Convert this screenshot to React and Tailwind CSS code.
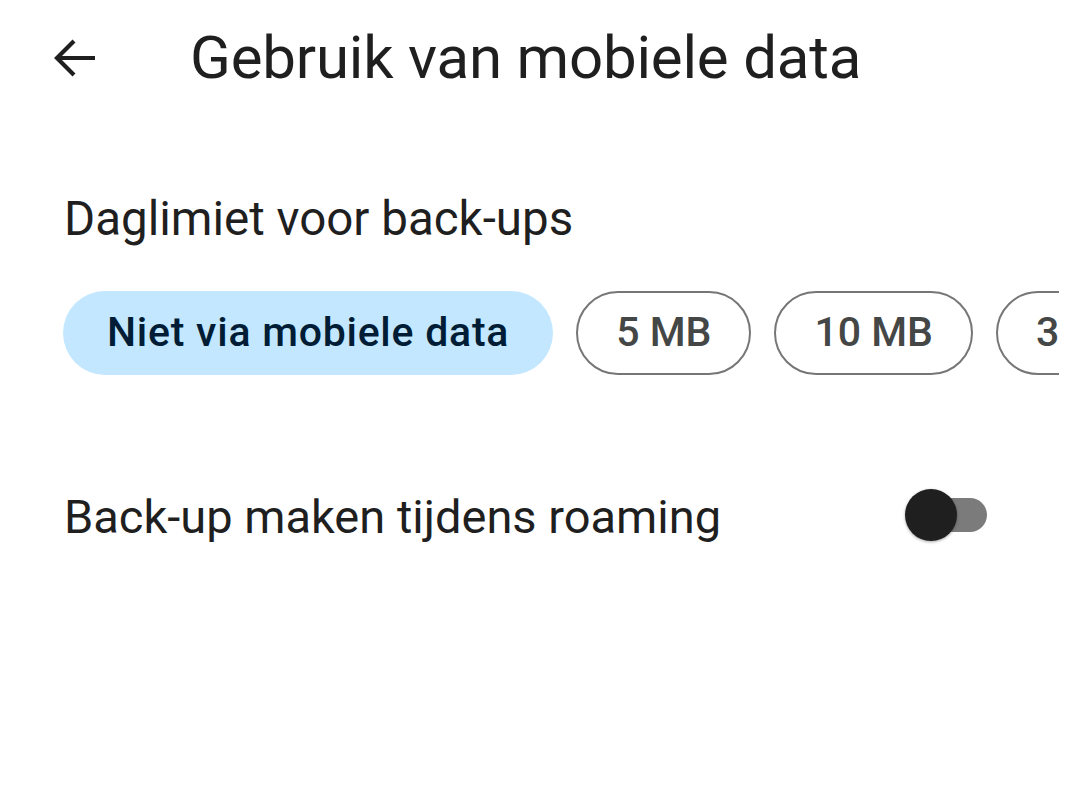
export default function App() {
  const font = { fontFamily: "Roboto, 'Noto Sans', sans-serif" };
  const chip = "h-[84px] px-[38px] rounded-full border-2 border-[#747775] text-[#444746] flex items-center text-[41px] font-medium shrink-0";
  return (
    <div className="w-[1080px] h-[810px] bg-white overflow-hidden text-[#1f1f1f]" style={font}>
      <div className="flex items-center h-[116px]">
        <div className="w-[190px] flex items-center pl-[53px]">
          <svg width="42" height="40" viewBox="0 0 42 40" fill="none" stroke="#1f1f1f" strokeWidth="4.2" strokeLinecap="butt">
            <path d="M42 20H4" />
            <path d="M21 3L4 20L21 37" />
          </svg>
        </div>
        <div className="text-[60px] leading-none tracking-[-0.2px]">Gebruik van mobiele data</div>
      </div>
      <div className="pl-[64px] pt-[80px] text-[47.5px] leading-none">Daglimiet voor back-ups</div>
      <div className="mt-[47px] ml-[63px] w-[996px] overflow-hidden">
        <div className="flex gap-[23px] w-max">
          <div className="h-[84px] px-[44px] rounded-full bg-[#c2e7ff] text-[#001d35] flex items-center text-[41px] font-medium tracking-[0.75px] shrink-0">Niet via mobiele data</div>
          <div className={chip}>5 MB</div>
          <div className={chip}>10 MB</div>
          <div className={chip}>30 MB</div>
        </div>
      </div>
      <div className="mt-[110px] flex items-center pl-[64px] pr-[93px] h-[60px]">
        <div className="flex-1 text-[47px] leading-none pt-[3px]">Back-up maken tijdens roaming</div>
        <div className="relative w-[82px] h-[56px] flex items-center">
          <div className="absolute left-[4px] right-0 h-[34px] rounded-full bg-[#7b7b7b]"></div>
          <div className="absolute left-0 w-[52px] h-[52px] rounded-full bg-[#1f1f1f] shadow-[0_1px_3px_rgba(0,0,0,0.35)]"></div>
        </div>
      </div>
    </div>
  );
}
